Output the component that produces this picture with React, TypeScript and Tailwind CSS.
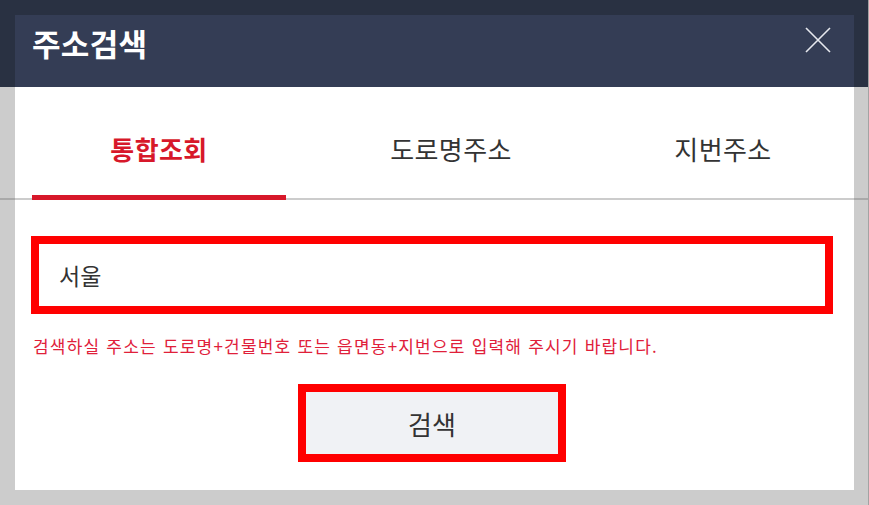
import React, { useState } from "react";

const FONT = "font-['Noto_Sans_CJK_KR','Noto_Sans',sans-serif]";

const tabs = [
  { label: "통합조회", w: "w-[254px]" },
  { label: "도로명주소", w: "w-[330px]" },
  { label: "지번주소", w: "w-[214px]" },
];

export default function App() {
  const [active, setActive] = useState(0);
  const [query, setQuery] = useState("서울");

  return (
    <div className={`relative w-[869px] h-[505px] overflow-hidden bg-[#cccccc] border-r border-[#a3a3a3] ${FONT}`}>
      {/* page behind the dialog */}
      <div className="h-[87px] bg-[#293142]" />
      <div className="mt-[111px] h-[2px] bg-[#a9a9a9]" />

      {/* dialog */}
      <div className="absolute left-[15px] top-[15px] w-[839px] h-[475px] bg-white flex flex-col">
        <div className="h-[72px] shrink-0 bg-[#343d55] flex items-start justify-between pl-[17px] pr-[23px] pt-[12px]">
          <h1 className="text-[31px] leading-[31px] font-bold text-white tracking-[0.3px]">주소검색</h1>
          <button className="w-[26px] h-[26px] flex items-center justify-center" aria-label="닫기">
            <svg width="26" height="26" viewBox="0 0 26 26">
              <path d="M1 1 L25 25 M25 1 L1 25" stroke="#e6e8ee" strokeWidth="1.6" fill="none" />
            </svg>
          </button>
        </div>

        <div className="flex h-[113px] shrink-0 border-b-2 border-[#cccccc] pl-[17px]">
          {tabs.map((t, i) => (
            <button
              key={t.label}
              onClick={() => setActive(i)}
              className={`relative ${t.w} h-full flex items-center justify-center pt-[12px] text-[26px] leading-[26px] tracking-[0.4px] ${
                i === active ? "font-bold text-[#d7182a]" : "text-[#333333]"
              }`}
            >
              {t.label}
              {i === active && <span className="absolute left-0 right-0 bottom-[-2px] h-[5px] bg-[#d7182a]" />}
            </button>
          ))}
        </div>

        <div className="px-[16px] pt-[36px] w-[834px] flex flex-col">
          <input
            value={query}
            onChange={(e) => setQuery(e.target.value)}
            className="w-[802px] h-[78px] border-[8px] border-[#ff0000] px-[20px] text-[23px] text-[#333333] outline-none"
          />
          <p className="mt-[20px] pl-[2px] text-[17px] leading-[24px] text-[#e0203a] tracking-[1.2px] [word-spacing:1px]">
            검색하실 주소는 도로명+건물번호 또는 읍면동+지번으로 입력해 주시기 바랍니다.
          </p>
          <div className="mt-[26px] flex justify-center">
            <button className="w-[268px] h-[78px] border-[8px] border-[#ff0000] bg-[#f0f2f5] text-[26px] text-[#333333]">
              검색
            </button>
          </div>
        </div>
      </div>
    </div>
  );
}
